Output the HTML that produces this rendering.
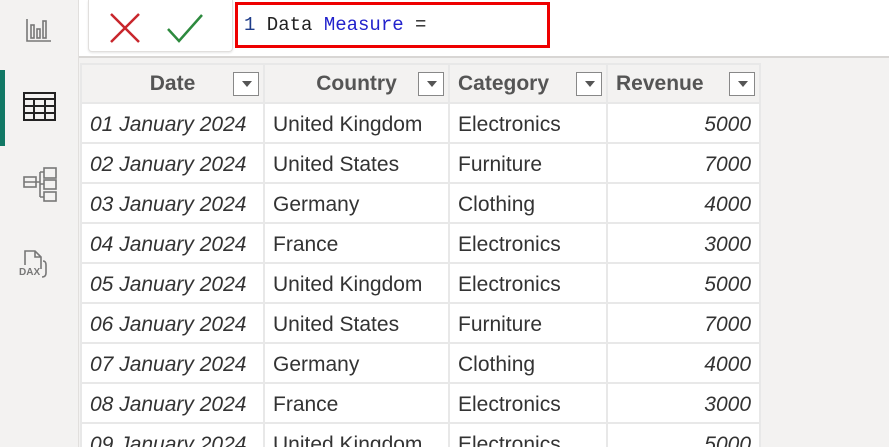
<html style="overflow:hidden;height:447px"><head><style>
body{margin:0;width:889px;height:447px;overflow:hidden;background:#f3f2f1;font-family:"Liberation Sans",sans-serif;position:relative}
.side{position:absolute;left:0;top:0;width:78px;height:447px;background:#f3f2f1;border-right:1px solid #e1dfdd}
.top{position:absolute;left:79px;top:0;width:810px;height:56px;background:#fff;border-bottom:2px solid #d8d6d4}
.btns{position:absolute;left:88px;top:0;width:143px;height:51px;background:#fff;border:1px solid #e1dfdd;border-top:none;border-radius:0 0 4px 4px;box-shadow:0 1px 2px rgba(0,0,0,.1)}
.fx{position:absolute;left:235px;top:2px;width:303px;height:40px;border:3px solid #e00;font-family:"Liberation Mono",monospace;font-size:19px;line-height:40px;padding-left:6px;color:#222}
.wrap{position:absolute;left:0;top:0;width:889px;height:447px;overflow:hidden}
table{position:absolute;left:80px;top:63px;border-collapse:collapse;background:#fff;font-size:21px;color:#333;table-layout:fixed}
td,th{border:2px solid #e8e8e8;height:40px;padding:0 8px;white-space:nowrap;overflow:hidden}
th{background:#f3f2f1;color:#555;font-weight:bold;position:relative;text-align:center;height:39px;padding-top:0}
th .dd{position:absolute;right:4px;top:7px;width:26px;height:24px;border:1px solid #888;background:#fff;box-sizing:border-box}
th .dd:after{content:"";position:absolute;left:8px;top:8px;border-left:5px solid transparent;border-right:5px solid transparent;border-top:6px solid #555}
td.d{font-style:italic}td.r{font-style:italic;text-align:right}
td{padding-top:4px}
</style></head><body><div class="wrap">
<div class="side">
<div style="position:absolute;left:0;top:70px;width:5px;height:76px;background:#117865"></div>
<svg style="position:absolute;left:25px;top:17px" width="28" height="28" viewBox="0 0 28 28" fill="none" stroke="#777" stroke-width="1.6"><path d="M2 2v22h24"/><rect x="6" y="8" width="3" height="13"/><rect x="12" y="12" width="3" height="9"/><rect x="18" y="4" width="3" height="17"/></svg>
<svg style="position:absolute;left:23px;top:92px" width="34" height="30" viewBox="0 0 34 30" fill="none" stroke="#222" stroke-width="2"><rect x="1" y="1" width="31" height="27"/><path d="M1 7h31M1 14h31M1 21h31M11 7v21M22 7v21"/></svg>
<svg style="position:absolute;left:22px;top:166px" width="36" height="36" viewBox="0 0 36 36" fill="none" stroke="#777" stroke-width="1.6"><rect x="2" y="11" width="12" height="10"/><path d="M2 16h12M14 16h4M18 6v25M18 6h4M18 18h4M18 31h4"/><rect x="22" y="2" width="12" height="10"/><rect x="22" y="14" width="12" height="9"/><rect x="22" y="26" width="12" height="9"/></svg>
<svg style="position:absolute;left:18px;top:245px" width="38" height="36" viewBox="0 0 38 36"><path d="M7 20V6h10l6 6v12M17 6v6h6M25 16q3 0 3 4v8q0 4-4 4" fill="none" stroke="#777" stroke-width="1.6"/><text x="1" y="30" font-size="10" font-weight="bold" fill="#777" font-family="Liberation Sans">DAX</text></svg>
</div>
<div class="top"></div>
<div class="btns">
<svg style="position:absolute;left:20px;top:12px" width="32" height="32"><path d="M2 2L30 30M30 2L2 30" stroke="#c8262c" stroke-width="2.5"/></svg>
<svg style="position:absolute;left:77px;top:12px" width="38" height="32"><path d="M2 17L13 29L36 3" stroke="#2d8a3e" stroke-width="2.5" fill="none"/></svg>
</div>
<div class="fx"><span style="color:#1f3d8a">1</span> Data <span style="color:#2222cc">Measure</span> =</div>
<table>
<colgroup><col style="width:183px"><col style="width:185px"><col style="width:158px"><col style="width:153px"></colgroup>
<tr><th>Date<span class="dd"></span></th><th>Country<span class="dd"></span></th><th style="text-align:left">Category<span class="dd"></span></th><th style="text-align:left">Revenue<span class="dd"></span></th></tr>
<tr><td class="d">01 January 2024</td><td>United Kingdom</td><td>Electronics</td><td class="r">5000</td></tr>
<tr><td class="d">02 January 2024</td><td>United States</td><td>Furniture</td><td class="r">7000</td></tr>
<tr><td class="d">03 January 2024</td><td>Germany</td><td>Clothing</td><td class="r">4000</td></tr>
<tr><td class="d">04 January 2024</td><td>France</td><td>Electronics</td><td class="r">3000</td></tr>
<tr><td class="d">05 January 2024</td><td>United Kingdom</td><td>Electronics</td><td class="r">5000</td></tr>
<tr><td class="d">06 January 2024</td><td>United States</td><td>Furniture</td><td class="r">7000</td></tr>
<tr><td class="d">07 January 2024</td><td>Germany</td><td>Clothing</td><td class="r">4000</td></tr>
<tr><td class="d">08 January 2024</td><td>France</td><td>Electronics</td><td class="r">3000</td></tr>
<tr><td class="d">09 January 2024</td><td>United Kingdom</td><td>Electronics</td><td class="r">5000</td></tr>
</table>
</div></body></html>
